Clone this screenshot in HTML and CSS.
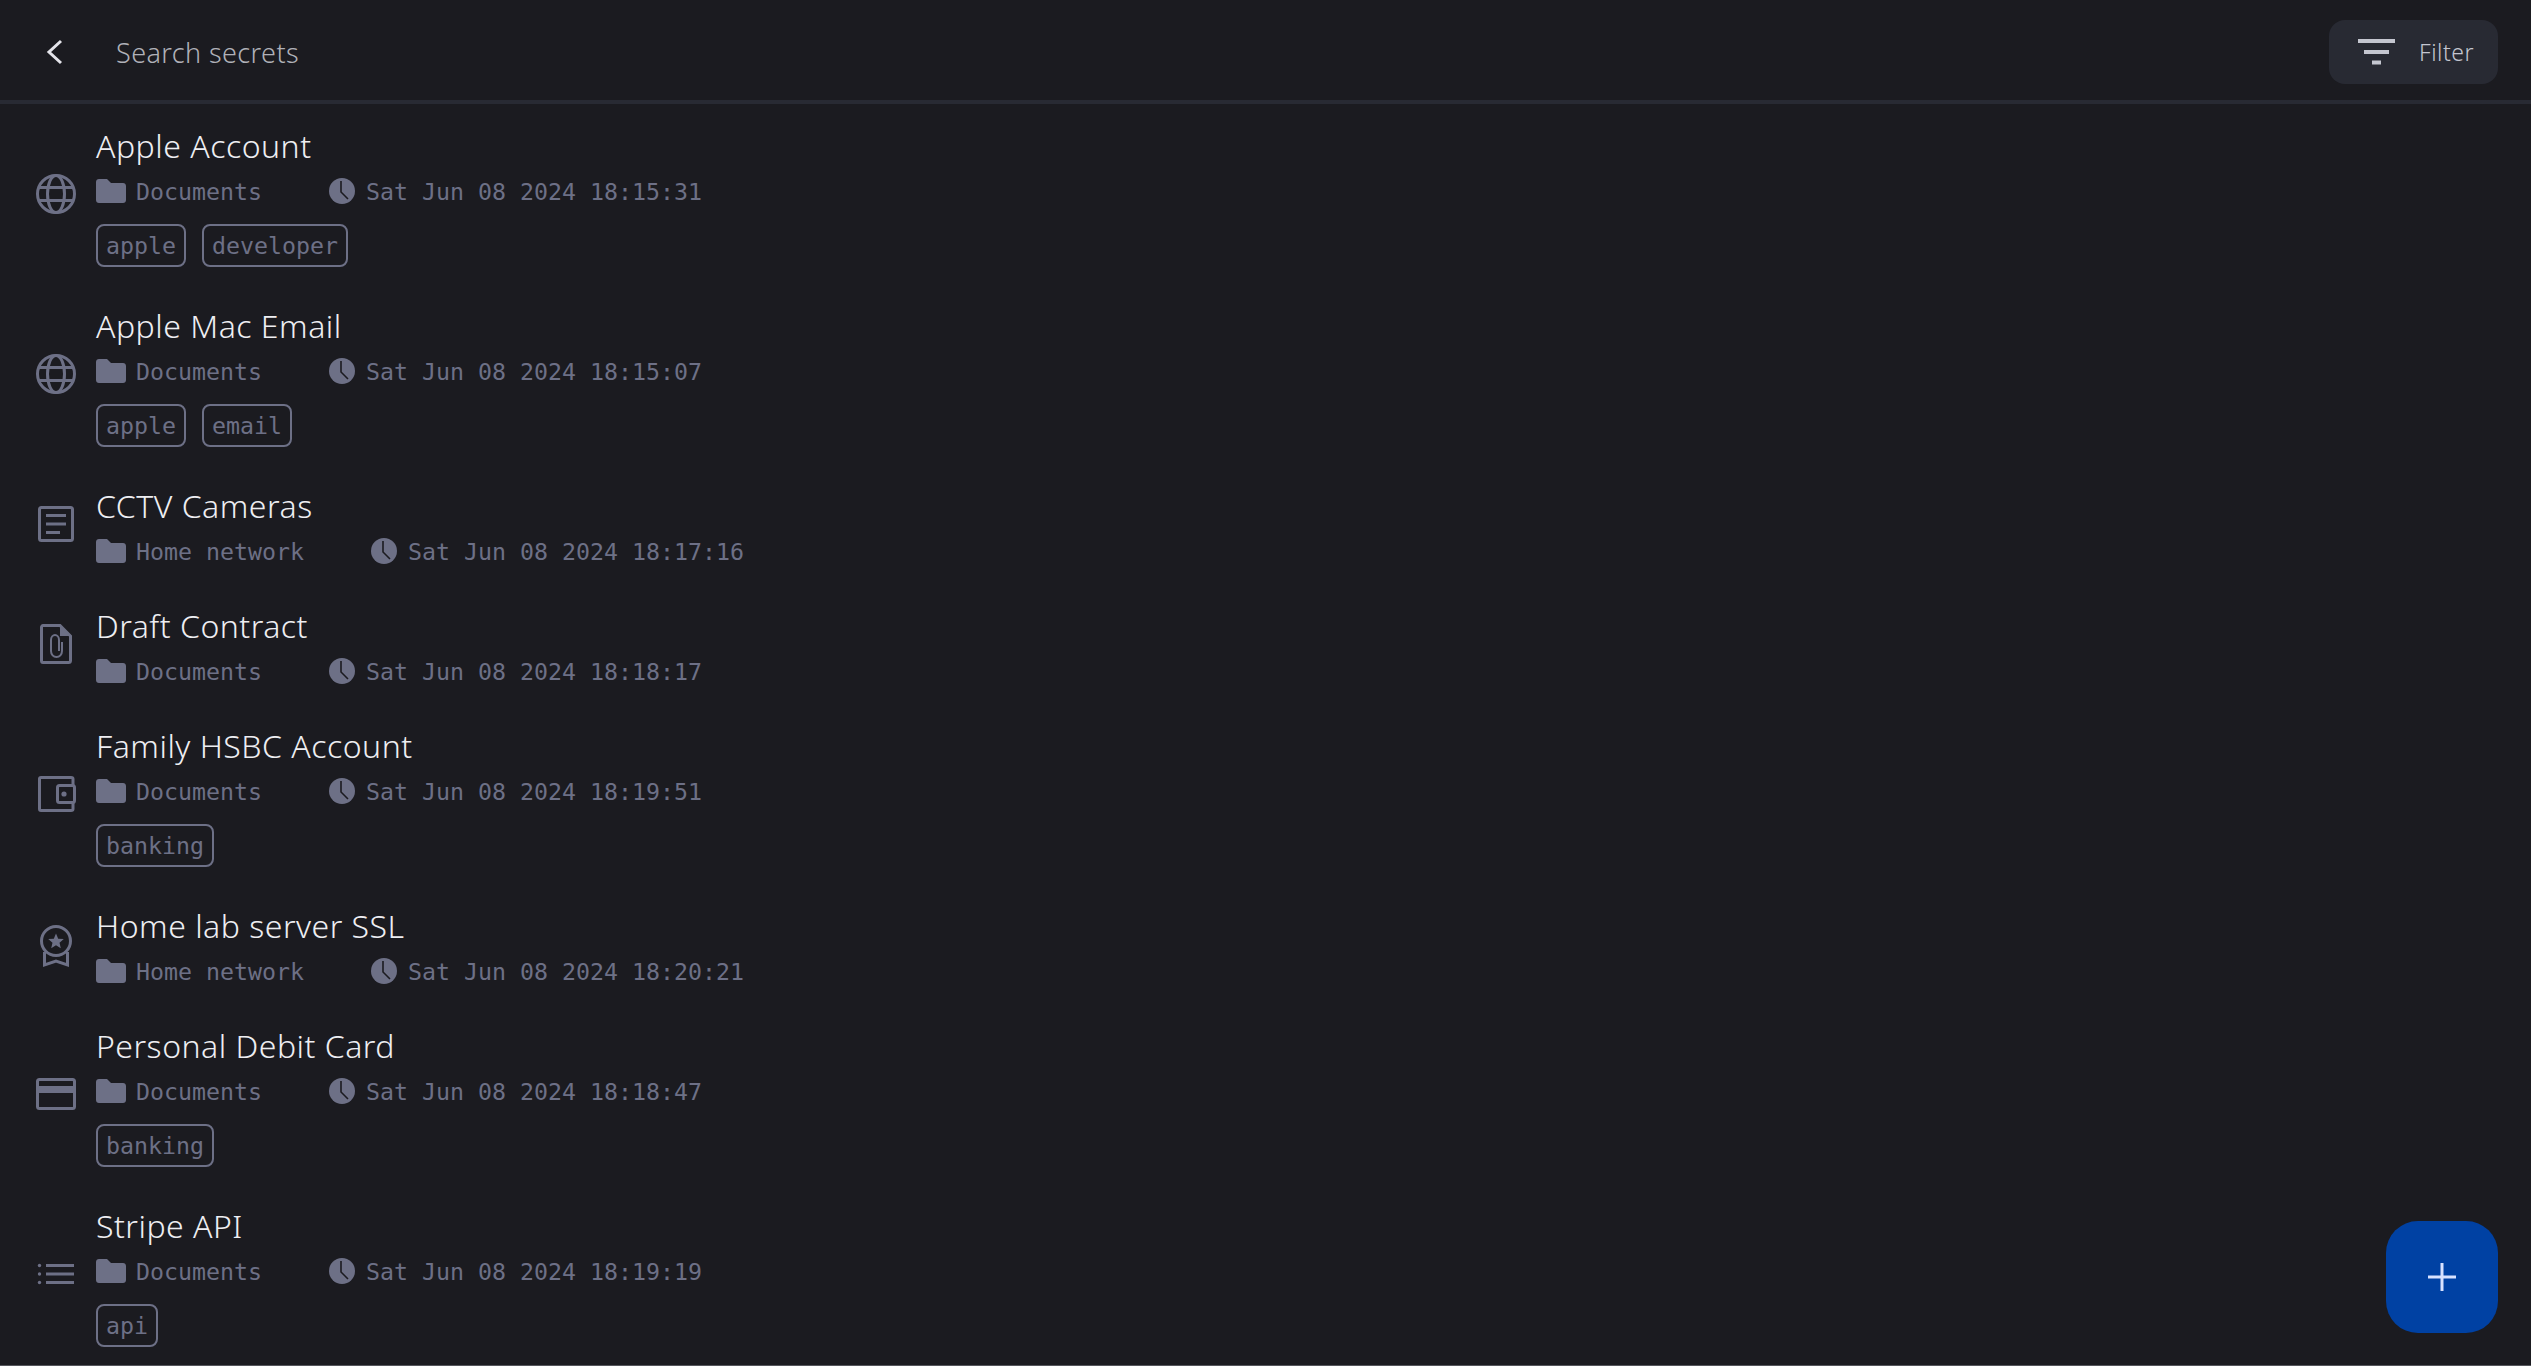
FILE: index.html
```html
<!DOCTYPE html>
<html lang="en">
  <head>
    <meta charset="UTF-8" />
    <title>Secrets</title>
    <link rel="stylesheet" href="styles.css">
  </head>
  <body>
    <svg class="defs" width="0" height="0">
      <symbol id="folder" viewBox="0 0 30 24">
        <path d="M3 0H11L15 4H27C28.7 4 30 5.300 30 7V21C30 22.700 28.700 24 27 24H3C1.300 24 0 22.700 0 21V3C0 1.300 1.300 0 3 0Z" />
      </symbol>
      <symbol id="clock" viewBox="0 0 26 26">
        <circle cx="13" cy="13" r="13" />
        <path class="hand" d="M12 3V14L19 21" />
      </symbol>
      <symbol id="globe" viewBox="0 0 48 48">
        <circle cx="24" cy="24" r="18.500" />
        <ellipse cx="24" cy="24" rx="8.500" ry="18.500" />
        <path d="M6.500 17.500H41.500M6.500 30.500H41.500" />
      </symbol>
      <symbol id="note" viewBox="0 0 48 48">
        <rect x="7.500" y="7.500" width="33" height="33" rx="2" />
        <path d="M14 15.500H34M14 24H34M14 32.500H28" />
      </symbol>
      <symbol id="file" viewBox="0 0 48 48">
        <path d="M11 5.500H28L38.500 16V40.500C38.500 41.600 37.600 42.500 36.500 42.500H11C10.200 42.500 9.500 41.600 9.500 40.500V7.500C9.500 6.400 10.200 5.500 11 5.500Z" />
        <path class="solid" d="M28 5.500L38.500 16H28Z" />
        <path class="thin" d="M30 22V31C30 34.500 27.500 37 24.500 37C21.500 37 19 34.500 19 31V20C19 17 21 15 23 15C25 15 27 17 27 20V31" />
      </symbol>
      <symbol id="wallet" viewBox="0 0 48 48">
        <path d="M41 15V9C41 8 40 7.500 39 7.500H9C8 7.500 7.500 8 7.500 9V39C7.500 40 8 40.500 9 40.500H39C40 40.500 41 40 41 39V33" />
        <rect x="25.500" y="15.500" width="17" height="17" rx="2" />
        <circle class="solid" cx="32" cy="24" r="2.600" />
      </symbol>
      <symbol id="badge" viewBox="0 0 48 48">
        <circle cx="24" cy="21" r="14.500" />
        <path d="M12.500 32V45L24 41L35.500 45V32" />
        <path class="solid" d="M24 13.500L26.200 18.700L31.800 19.100L27.500 22.800L28.800 28.200L24 25.300L19.200 28.200L20.500 22.800L16.200 19.100L21.800 18.700Z" />
      </symbol>
      <symbol id="card" viewBox="0 0 48 48">
        <rect x="5.500" y="9.500" width="37" height="29" rx="2" />
        <path class="solid" d="M5.500 16H42.500V23H5.500Z" />
      </symbol>
      <symbol id="lines" viewBox="0 0 48 48">
        <path d="M14 15.500H42M14 24H42M14 32.500H42" />
        <circle class="solid" cx="7.500" cy="15.500" r="1.700" />
        <circle class="solid" cx="7.500" cy="24" r="1.700" />
        <circle class="solid" cx="7.500" cy="32.500" r="1.700" />
      </symbol>
    </svg>

    <header class="top-bar">
      <button class="back-btn" aria-label="Back">
        <svg width="18" height="26" viewBox="0 0 18 26"><path d="M15 2L3 13L15 24" /></svg>
      </button>
      <div class="search-label">Search secrets</div>
      <button class="filter-btn">
        <svg width="38" height="26" viewBox="0 0 38 26"><path d="M0 2H37M6 13H31M14 23.500H23" /></svg>
        Filter
      </button>
    </header>

    <!-- Secrets list -->
    <main class="secret-list">
      <div class="secret-row">
        <svg class="kind-icon"><use href="#globe" /></svg>
        <div class="secret-info">
          <div class="secret-name">Apple Account</div>
          <div class="secret-meta">
            <svg class="folder-icon"><use href="#folder" /></svg>
            <span class="folder-name">Documents</span>
            <svg class="clock-icon"><use href="#clock" /></svg>
            <span>Sat Jun 08 2024 18:15:31</span>
          </div>
          <div class="secret-tags"><span class="tag">apple</span><span class="tag">developer</span></div>
        </div>
      </div>

      <div class="secret-row">
        <svg class="kind-icon"><use href="#globe" /></svg>
        <div class="secret-info">
          <div class="secret-name">Apple Mac Email</div>
          <div class="secret-meta">
            <svg class="folder-icon"><use href="#folder" /></svg>
            <span class="folder-name">Documents</span>
            <svg class="clock-icon"><use href="#clock" /></svg>
            <span>Sat Jun 08 2024 18:15:07</span>
          </div>
          <div class="secret-tags"><span class="tag">apple</span><span class="tag">email</span></div>
        </div>
      </div>

      <div class="secret-row">
        <svg class="kind-icon"><use href="#note" /></svg>
        <div class="secret-info">
          <div class="secret-name">CCTV Cameras</div>
          <div class="secret-meta">
            <svg class="folder-icon"><use href="#folder" /></svg>
            <span class="folder-name">Home network</span>
            <svg class="clock-icon"><use href="#clock" /></svg>
            <span>Sat Jun 08 2024 18:17:16</span>
          </div>
        </div>
      </div>

      <div class="secret-row">
        <svg class="kind-icon"><use href="#file" /></svg>
        <div class="secret-info">
          <div class="secret-name">Draft Contract</div>
          <div class="secret-meta">
            <svg class="folder-icon"><use href="#folder" /></svg>
            <span class="folder-name">Documents</span>
            <svg class="clock-icon"><use href="#clock" /></svg>
            <span>Sat Jun 08 2024 18:18:17</span>
          </div>
        </div>
      </div>

      <div class="secret-row">
        <svg class="kind-icon"><use href="#wallet" /></svg>
        <div class="secret-info">
          <div class="secret-name">Family HSBC Account</div>
          <div class="secret-meta">
            <svg class="folder-icon"><use href="#folder" /></svg>
            <span class="folder-name">Documents</span>
            <svg class="clock-icon"><use href="#clock" /></svg>
            <span>Sat Jun 08 2024 18:19:51</span>
          </div>
          <div class="secret-tags"><span class="tag">banking</span></div>
        </div>
      </div>

      <div class="secret-row">
        <svg class="kind-icon"><use href="#badge" /></svg>
        <div class="secret-info">
          <div class="secret-name">Home lab server SSL</div>
          <div class="secret-meta">
            <svg class="folder-icon"><use href="#folder" /></svg>
            <span class="folder-name">Home network</span>
            <svg class="clock-icon"><use href="#clock" /></svg>
            <span>Sat Jun 08 2024 18:20:21</span>
          </div>
        </div>
      </div>

      <div class="secret-row">
        <svg class="kind-icon"><use href="#card" /></svg>
        <div class="secret-info">
          <div class="secret-name">Personal Debit Card</div>
          <div class="secret-meta">
            <svg class="folder-icon"><use href="#folder" /></svg>
            <span class="folder-name">Documents</span>
            <svg class="clock-icon"><use href="#clock" /></svg>
            <span>Sat Jun 08 2024 18:18:47</span>
          </div>
          <div class="secret-tags"><span class="tag">banking</span></div>
        </div>
      </div>

      <div class="secret-row">
        <svg class="kind-icon"><use href="#lines" /></svg>
        <div class="secret-info">
          <div class="secret-name">Stripe API</div>
          <div class="secret-meta">
            <svg class="folder-icon"><use href="#folder" /></svg>
            <span class="folder-name">Documents</span>
            <svg class="clock-icon"><use href="#clock" /></svg>
            <span>Sat Jun 08 2024 18:19:19</span>
          </div>
          <div class="secret-tags"><span class="tag">api</span></div>
        </div>
      </div>
    </main>

    <button class="add-btn" aria-label="Add secret">
      <svg width="28" height="28" viewBox="0 0 28 28"><path d="M14 0V28M0 14H28" /></svg>
    </button>
  </body>
</html>
```

FILE: styles.css
```css
body {
  margin: 0;
  height: 1366px;
  overflow: hidden;
  position: relative;
  box-sizing: border-box;
  background: #1b1b20;
  border-bottom: 1px solid #55565c;
  font-family: "Noto Sans", sans-serif;
  color: #eeeef2;
}

.defs {
  position: absolute;
}

button {
  border: none;
  font-family: inherit;
  cursor: pointer;
}

.top-bar {
  display: flex;
  align-items: center;
  box-sizing: border-box;
  height: 104px;
  padding: 4px 33px 0 46px;
  border-bottom: 4px solid #282a33;
}

.back-btn {
  display: flex;
  width: 70px;
  padding: 0;
  background: none;
}

.back-btn svg {
  fill: none;
  stroke: #e4e4ea;
  stroke-width: 3;
}

.search-label {
  flex: 1;
  font-size: 27px;
  font-weight: 300;
  letter-spacing: 0.4px;
  color: #b0b1b8;
}

.filter-btn {
  display: flex;
  align-items: center;
  gap: 23px;
  height: 64px;
  padding: 0 24px 0 29px;
  background: #282a33;
  border-radius: 16px;
  font-size: 23px;
  font-weight: 300;
  letter-spacing: 0.5px;
  color: #c4c6d0;
}

.filter-btn svg {
  fill: none;
  stroke: #c4c6d0;
  stroke-width: 4;
}

.secret-row {
  display: flex;
  align-items: center;
  gap: 16px;
  padding: 13px 32px;
}

.kind-icon {
  width: 48px;
  height: 48px;
  flex-shrink: 0;
  fill: none;
  stroke: #6d7086;
  stroke-width: 3;
}

.solid {
  fill: #6d7086;
  stroke: none;
}

.thin {
  stroke-width: 2;
}

.secret-name {
  box-sizing: border-box;
  height: 54px;
  padding-top: 3px;
  line-height: 52px;
  font-size: 32px;
  font-weight: 300;
  letter-spacing: 0.5px;
}

.secret-meta {
  display: flex;
  align-items: center;
  height: 40px;
  font-family: "DejaVu Sans Mono", monospace;
  font-size: 23.250px;
  color: #6d7086;
}

.folder-icon {
  width: 30px;
  height: 24px;
  margin-right: 10px;
  fill: #6d7086;
}

.folder-name {
  margin-right: 67px;
}

.clock-icon {
  width: 26px;
  height: 26px;
  margin-right: 11px;
  fill: #6d7086;
}

.hand {
  fill: none;
  stroke: #1b1b20;
  stroke-width: 1.600;
}

.secret-tags {
  display: flex;
  gap: 16px;
  margin: 13px 0 4px;
}

.tag {
  height: 39px;
  line-height: 39px;
  padding: 0 8px;
  border: 2px solid #6d7086;
  border-radius: 8px;
  font-family: "DejaVu Sans Mono", monospace;
  font-size: 23.250px;
  color: #6d7086;
}

.add-btn {
  position: absolute;
  right: 33px;
  bottom: 32px;
  display: flex;
  align-items: center;
  justify-content: center;
  width: 112px;
  height: 112px;
  background: #0041a3;
  border-radius: 32px;
}

.add-btn svg {
  fill: none;
  stroke: #d8e2ff;
  stroke-width: 3;
}
```
